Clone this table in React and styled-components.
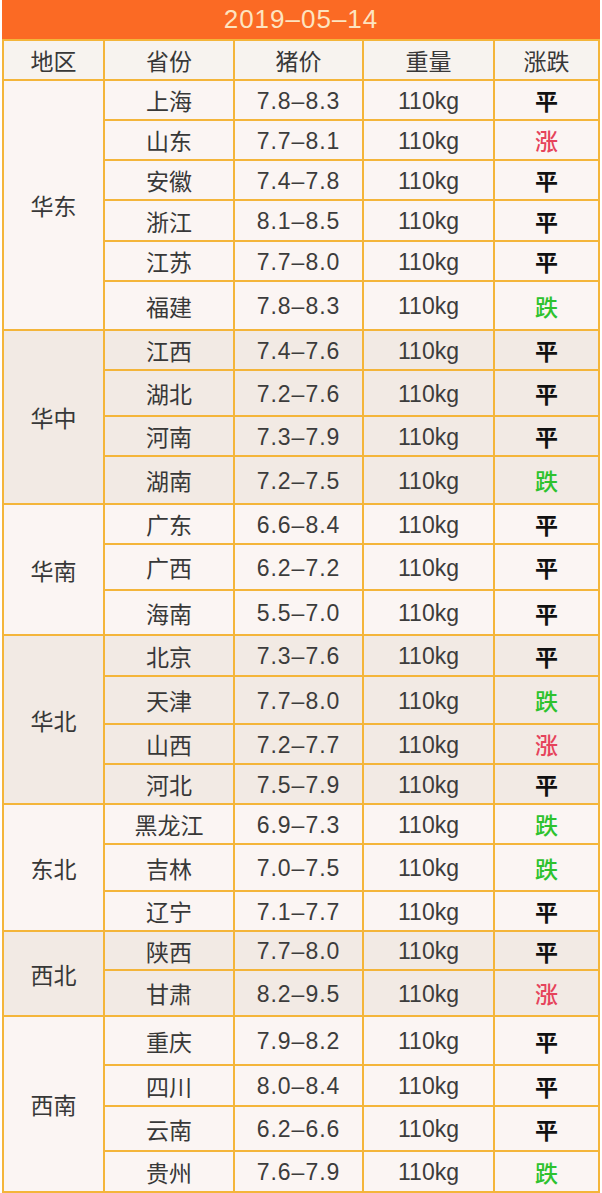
import React from "react";
import styled, { createGlobalStyle } from "styled-components";

const GlobalStyle = createGlobalStyle`
  *, *::before, *::after {
    box-sizing: border-box;
  }
  body {
    margin: 0;
    background: #ffffff;
    font-family: "Noto Sans CJK SC", "Noto Sans", sans-serif;
  }
`;

const LINE = "#f4b53a";

const Sheet = styled.div`
  width: 598px;
  margin: 0 2px;
  border: 2px solid ${LINE};
  border-top: none;
  color: #383838;
`;

const Title = styled.div`
  height: 41px;
  background: #fb6a24;
  color: #fde4c0;
  display: flex;
  align-items: center;
  justify-content: center;
  font-family: "Liberation Sans", "Noto Sans", sans-serif;
  font-size: 26px;
  letter-spacing: 1px;
  border-bottom: 2px solid ${LINE};
  margin: 0 -2px;
`;

const HeadRow = styled.div`
  display: grid;
  grid-template-columns: 101px 130px 129px 131px 1fr;
  height: 40px;
  background: #f7f3ef;
  border-bottom: 2px solid ${LINE};
`;

const HeadCell = styled.div`
  display: flex;
  align-items: center;
  justify-content: center;
  font-size: 23px;
  border-right: ${(p) => (p.$last ? "none" : `2px solid ${LINE}`)};
`;

const Group = styled.div`
  display: grid;
  grid-template-columns: 101px 1fr;
  background: ${(p) => (p.$shade ? "#f2eae4" : "#fbf5f3")};
  border-bottom: ${(p) => (p.$last ? "none" : `2px solid ${LINE}`)};
`;

const Region = styled.div`
  display: flex;
  align-items: center;
  justify-content: center;
  font-size: 23px;
  border-right: 2px solid ${LINE};
`;

const Rows = styled.div`
  display: flex;
  flex-direction: column;
`;

const Row = styled.div`
  display: grid;
  grid-template-columns: 130px 129px 131px 1fr;
  height: ${(p) => p.$h}px;
  border-bottom: ${(p) => (p.$last ? "none" : `2px solid ${LINE}`)};
`;

const Cell = styled.div`
  display: flex;
  align-items: center;
  justify-content: center;
  font-size: 23px;
  border-right: ${(p) => (p.$last ? "none" : `2px solid ${LINE}`)};
`;

const Num = styled(Cell)`
  font-family: "Liberation Sans", "Noto Sans", sans-serif;
  font-size: 23px;
  color: #3c3c3c;
  padding-top: 2px;
  letter-spacing: ${(p) => (p.$wide ? "1px" : "0")};
`;

const TREND_COLORS = { 平: "#111111", 涨: "#e6435b", 跌: "#2ec22e" };

const Trend = styled(Cell)`
  font-size: 23px;
  font-weight: ${(p) => (p.$t === "平" ? 700 : 500)};
  color: ${(p) => TREND_COLORS[p.$t]};
`;

// [省份, 猪价, 涨跌, 行高(含下边线)]
const groups = [
  {
    name: "华东",
    rows: [
      ["上海", "7.8–8.3", "平", 40],
      ["山东", "7.7–8.1", "涨", 40],
      ["安徽", "7.4–7.8", "平", 40],
      ["浙江", "8.1–8.5", "平", 41],
      ["江苏", "7.7–8.0", "平", 40],
      ["福建", "7.8–8.3", "跌", 49],
    ],
  },
  {
    name: "华中",
    rows: [
      ["江西", "7.4–7.6", "平", 40],
      ["湖北", "7.2–7.6", "平", 46],
      ["河南", "7.3–7.9", "平", 40],
      ["湖南", "7.2–7.5", "跌", 48],
    ],
  },
  {
    name: "华南",
    rows: [
      ["广东", "6.6–8.4", "平", 40],
      ["广西", "6.2–7.2", "平", 46],
      ["海南", "5.5–7.0", "平", 45],
    ],
  },
  {
    name: "华北",
    rows: [
      ["北京", "7.3–7.6", "平", 41],
      ["天津", "7.7–8.0", "跌", 48],
      ["山西", "7.2–7.7", "涨", 40],
      ["河北", "7.5–7.9", "平", 40],
    ],
  },
  {
    name: "东北",
    rows: [
      ["黑龙江", "6.9–7.3", "跌", 40],
      ["吉林", "7.0–7.5", "跌", 47],
      ["辽宁", "7.1–7.7", "平", 40],
    ],
  },
  {
    name: "西北",
    rows: [
      ["陕西", "7.7–8.0", "平", 39],
      ["甘肃", "8.2–9.5", "涨", 46],
    ],
  },
  {
    name: "西南",
    rows: [
      ["重庆", "7.9–8.2", "平", 49],
      ["四川", "8.0–8.4", "平", 41],
      ["云南", "6.2–6.6", "平", 45],
      ["贵州", "7.6–7.9", "跌", 41],
    ],
  },
];

const App = () => {
  return (
    <>
      <GlobalStyle />
      <Sheet>
        <Title>2019–05–14</Title>
        <HeadRow>
          <HeadCell>地区</HeadCell>
          <HeadCell>省份</HeadCell>
          <HeadCell>猪价</HeadCell>
          <HeadCell>重量</HeadCell>
          <HeadCell $last>涨跌</HeadCell>
        </HeadRow>
        {groups.map((g, gi) => (
          <Group key={g.name} $shade={gi % 2 === 1} $last={gi === groups.length - 1}>
            <Region>{g.name}</Region>
            <Rows>
              {g.rows.map(([prov, price, trend, h], ri) => {
                const last = ri === g.rows.length - 1;
                return (
                  <Row key={prov} $h={last ? h - 2 : h} $last={last}>
                    <Cell>{prov}</Cell>
                    <Num $wide>{price}</Num>
                    <Num>110kg</Num>
                    <Trend $t={trend} $last>
                      {trend}
                    </Trend>
                  </Row>
                );
              })}
            </Rows>
          </Group>
        ))}
      </Sheet>
    </>
  );
};

export default App;
